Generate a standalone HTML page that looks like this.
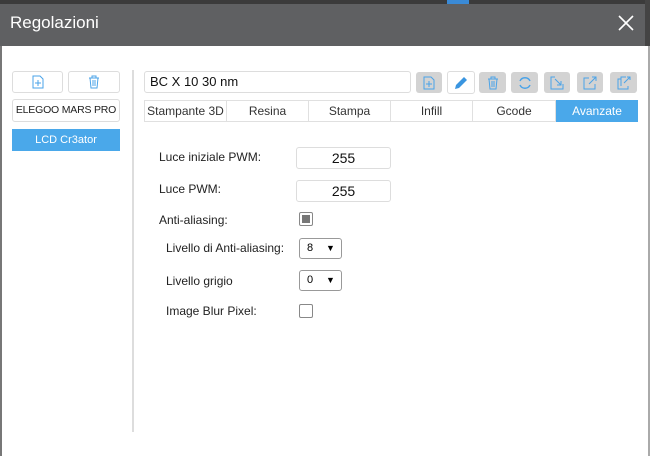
<!DOCTYPE html><html><head><style>
body{margin:0;width:650px;height:456px;overflow:hidden;background:#fff;font-family:"Liberation Sans",sans-serif;position:relative}
.a{position:absolute;box-sizing:border-box}
.btn{border:1px solid #ddd;border-radius:3px;background:#fff}
.gb{background:#d3d3d3;border-radius:3px}
.t{font-size:12px;color:#222;white-space:nowrap}
.tab{border:1px solid #e0e0e0;font-size:12px;color:#333;text-align:center;line-height:20px;top:100px;height:22px;white-space:nowrap}
svg{position:absolute;left:50%;top:50%;transform:translate(-50%,-50%)}
</style></head><body>
<div class="a" style="left:0;top:0;width:650px;height:4px;background:#3b3b3b"></div>
<div class="a" style="left:447px;top:0;width:22px;height:4px;background:#3a8ad6"></div>
<div class="a" style="left:0;top:4px;width:650px;height:42px;background:#5f6062"></div>
<div class="a" style="left:10px;top:13px;font-size:17px;color:#fff">Regolazioni</div>
<div class="a" style="left:617px;top:14px;width:18px;height:18px"><svg width="18" height="18"><path d="M2 2L16 16M16 2L2 16" stroke="#fff" stroke-width="1.6"/></svg></div>
<div class="a" style="left:0;top:46px;width:2px;height:410px;background:#777"></div>
<div class="a" style="left:645px;top:0;width:5px;height:46px;background:#444"></div>
<div class="a" style="left:648px;top:46px;width:2px;height:410px;background:#aaa"></div>
<div class="a" style="left:132px;top:70px;width:2px;height:362px;background:#ddd"></div>
<div class="a btn" style="left:12px;top:71px;width:51px;height:22px"><svg width="12" height="14"><path d="M1 1h7l3 3v9H1z M6 5v6M3 8h6" fill="none" stroke="#4aa3e8"/></svg></div>
<div class="a btn" style="left:68px;top:71px;width:52px;height:22px"><svg width="12" height="14"><path d="M1 3h10M4 3V1h4v2M2 3l1 10h6l1-10M5 5v6M7 5v6" fill="none" stroke="#4aa3e8"/></svg></div>
<div class="a btn t" style="left:12px;top:99px;width:108px;height:23px;text-align:center;line-height:21px;font-size:10.5px;letter-spacing:-0.2px">ELEGOO MARS PRO</div>
<div class="a" style="left:12px;top:129px;width:108px;height:22px;background:#4aa8ea;color:#fff;font-size:11px;text-align:center;line-height:22px">LCD Cr3ator</div>
<div class="a btn t" style="left:144px;top:71px;width:267px;height:22px;padding-left:5px;line-height:20px;font-size:13px;color:#111">BC X 10 30 nm</div>
<div class="a gb" style="left:416px;top:72px;width:26px;height:21px"><svg width="12" height="14"><path d="M1 1h7l3 3v9H1z M6 5v6M3 8h6" fill="none" stroke="#4aa3e8"/></svg></div>
<div class="a btn" style="left:447px;top:71px;width:28px;height:23px"><svg width="14" height="14"><path d="M1 13l1-4 8-8 3 3-8 8z" fill="#3a95e0"/></svg></div>
<div class="a gb" style="left:479px;top:72px;width:27px;height:21px"><svg width="12" height="14"><path d="M1 3h10M4 3V1h4v2M2 3l1 10h6l1-10M5 5v6M7 5v6" fill="none" stroke="#4aa3e8"/></svg></div>
<div class="a gb" style="left:511px;top:72px;width:27px;height:21px"><svg width="14" height="14"><path d="M12 5A5.5 5.5 0 0 0 2 5M2 9a5.5 5.5 0 0 0 10 0" fill="none" stroke="#4aa3e8" stroke-width="1.5"/></svg></div>
<div class="a gb" style="left:544px;top:72px;width:26px;height:21px"><svg width="14" height="14"><path d="M5 1H1v12h12V8M5 3l6 6M11 5v4H7" fill="none" stroke="#4aa3e8"/></svg></div>
<div class="a gb" style="left:577px;top:72px;width:26px;height:21px"><svg width="14" height="14"><path d="M6 2H1v11h11V8M6 8l7-7M9 1h4v4" fill="none" stroke="#4aa3e8"/></svg></div>
<div class="a gb" style="left:610px;top:72px;width:27px;height:21px"><svg width="14" height="14"><path d="M4 3H1v10h10v-3M4 10V1h5M7 7l6-6M10 1h3v3" fill="none" stroke="#4aa3e8"/></svg></div>
<div class="a tab" style="left:144px;width:83px">Stampante 3D</div>
<div class="a tab" style="left:226px;width:83px">Resina</div>
<div class="a tab" style="left:308px;width:83px">Stampa</div>
<div class="a tab" style="left:390px;width:83px">Infill</div>
<div class="a tab" style="left:472px;width:84px">Gcode</div>
<div class="a tab" style="left:556px;width:82px;background:#4aa8ea;color:#fff;border-color:#4aa8ea">Avanzate</div>
<div class="a t" style="left:159px;top:150px">Luce iniziale PWM:</div>
<div class="a btn" style="left:296px;top:147px;width:95px;height:22px;text-align:center;font-size:14px;line-height:20px;color:#111">255</div>
<div class="a t" style="left:159px;top:182px">Luce PWM:</div>
<div class="a btn" style="left:296px;top:180px;width:95px;height:22px;text-align:center;font-size:14px;line-height:20px;color:#111">255</div>
<div class="a t" style="left:159px;top:213px">Anti-aliasing:</div>
<div class="a" style="left:299px;top:212px;width:14px;height:14px;border:1px solid #888;border-radius:2px"><div class="a" style="left:2px;top:2px;width:8px;height:8px;background:#777"></div></div>
<div class="a t" style="left:166px;top:241px">Livello di Anti-aliasing:</div>
<div class="a btn" style="left:299px;top:238px;width:43px;height:21px;border-color:#999;font-size:11px;padding-left:7px;line-height:19px">8<span style="position:absolute;left:26px;font-size:9px">▼</span></div>
<div class="a t" style="left:166px;top:274px">Livello grigio</div>
<div class="a btn" style="left:299px;top:270px;width:43px;height:21px;border-color:#999;font-size:11px;padding-left:7px;line-height:19px">0<span style="position:absolute;left:26px;font-size:9px">▼</span></div>
<div class="a t" style="left:166px;top:304px">Image Blur Pixel:</div>
<div class="a" style="left:299px;top:304px;width:14px;height:14px;border:1px solid #888;border-radius:2px"></div>
</body></html>
